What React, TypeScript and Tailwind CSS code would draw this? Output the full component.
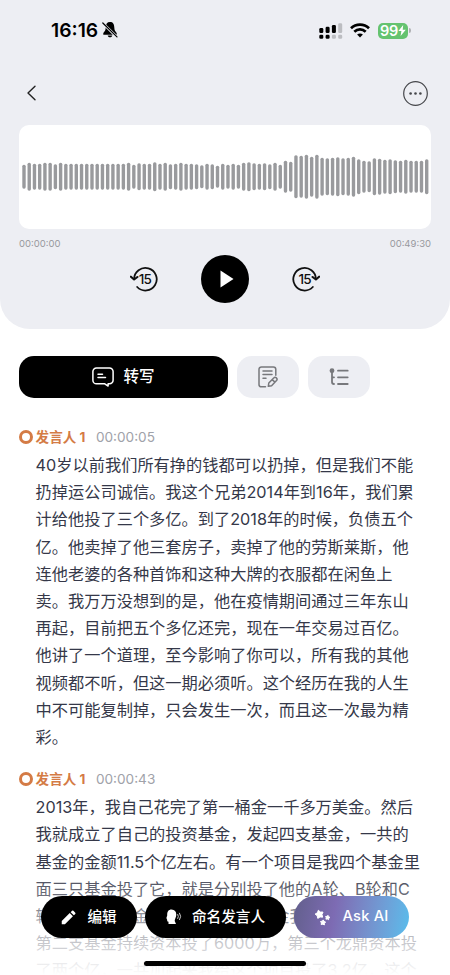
interface Segment {
  speaker: string;
  time: string;
  lines: string[];
}

const segments: Segment[] = [
  {
    speaker: '发言人 1',
    time: '00:00:05',
    lines: [
      '40岁以前我们所有挣的钱都可以扔掉，但是我们不能',
      '扔掉运公司诚信。我这个兄弟2014年到16年，我们累',
      '计给他投了三个多亿。到了2018年的时候，负债五个',
      '亿。他卖掉了他三套房子，卖掉了他的劳斯莱斯，他',
      '连他老婆的各种首饰和这种大牌的衣服都在闲鱼上',
      '卖。我万万没想到的是，他在疫情期间通过三年东山',
      '再起，目前把五个多亿还完，现在一年交易过百亿。',
      '他讲了一个道理，至今影响了你可以，所有我的其他',
      '视频都不听，但这一期必须听。这个经历在我的人生',
      '中不可能复制掉，只会发生一次，而且这一次最为精',
      '彩。',
    ],
  },
  {
    speaker: '发言人 1',
    time: '00:00:43',
    lines: [
      '2013年，我自己花完了第一桶金一千多万美金。然后',
      '我就成立了自己的投资基金，发起四支基金，一共的',
      '基金的金额11.5个亿左右。有一个项目是我四个基金里',
      '面三只基金投了它，就是分别投了他的A轮、B轮和C',
      '轮，我们的基金在B轮投了它，基金我',
      '第二支基金持续资本投了6000万，第三个龙鼎资本投',
      '了两个亿，一共加起来我给这个项目投了3.2亿，这个',
    ],
  },
];

const bars = [
  24, 28, 26, 26, 28, 28, 25, 28, 26, 26, 26, 26, 26, 26, 26, 26, 26, 26, 26, 26, 28, 24, 27, 26, 26, 29,
  26, 28, 25, 26, 28, 26, 26, 25, 23, 26, 25, 22, 26, 24, 26, 24, 28, 29, 27, 26, 27, 25, 28, 24, 32, 30,
  43, 42, 44, 40, 44, 38, 37, 38, 39, 37, 38, 40, 35, 32, 31, 37, 36, 34, 35, 33, 32, 34, 32, 32, 32, 35,
];

function starPoints(cx: number, cy: number, r: number, turn: number) {
  return Array.from({ length: 10 }, (_, i) => {
    const radius = i % 2 ? r * 0.6 : r;
    const angle = (i * Math.PI) / 5 + turn;
    return `${(cx + radius * Math.sin(angle)).toFixed(2)},${(cy - radius * Math.cos(angle)).toFixed(2)}`;
  }).join(' ');
}

function StatusBar() {
  return (
    <div className="flex h-[61px] items-center justify-between pl-[51px] pr-[39px]">
      <div className="flex items-center gap-[4px]">
        <span className="text-[19.3px] font-semibold leading-none text-black">16:16</span>
        <svg className="h-[18px] w-[16px]" viewBox="0 0 16 18">
          <path d="M8 1C5 1 3.8 3 3.7 6.5 3.6 9.5 2.8 10.3 1.3 12v1.7h13.4V12c-1.5-1.7-2.3-2.5-2.4-5.5C12.2 3 11 1 8 1ZM5.7 14.5c.2 1.2 1 1.8 2.3 1.8s2.1-.6 2.3-1.8Z" fill="#000" />
          <path d="M1.3 2.6 14.8 16" stroke="#edeef3" strokeWidth="2.6" />
          <path d="M.8 2 15 15.9" stroke="#000" strokeWidth="1.2" strokeLinecap="round" />
        </svg>
      </div>
      <div className="flex items-center">
        <svg className="h-4 w-6" viewBox="0 0 24 16">
          <g fill="#000">
            <rect x=".3" y="5" width="4" height="5" rx="1.3" />
            <rect x="6.6" y="3.8" width="4" height="6.2" rx="1.3" />
            <rect x="12.9" y="2" width="4" height="8" rx="1.3" />
            <rect x=".3" y="11.7" width="4" height="4" rx="1.3" />
            <rect x="6.6" y="11.7" width="4" height="4" rx="1.3" />
          </g>
          <g fill="#bcbdc1">
            <rect x="19.2" y=".2" width="4" height="9.8" rx="1.3" />
            <rect x="12.9" y="11.7" width="4" height="4" rx="1.3" />
            <rect x="19.2" y="11.7" width="4" height="4" rx="1.3" />
          </g>
        </svg>
        <svg className="ml-[7px] h-[15px] w-5" viewBox="0 0 20 15" fill="none" stroke="#000" strokeWidth="2.7">
          <path d="M1 5.3C6 .5 14 .5 19 5.3" />
          <path d="M4.3 8.7c3.3-3.1 8.1-3.1 11.4 0" />
          <path d="M10 14.5 7.1 11.5c1.7-1.4 4.1-1.4 5.8 0Z" fill="#000" stroke="none" />
        </svg>
        <div className="ml-[8px] flex h-[16px] w-[30px] items-center justify-center rounded-[5px] bg-[#65c36f] text-white">
          <span className="pt-px text-[14.5px] font-semibold leading-none tracking-[-0.2px]">99</span>
          <svg className="h-[11px] w-[8px]" viewBox="0 0 8 11">
            <path d="M5.2 0 .4 6h3L2.6 11 7.8 4.7H4.7Z" fill="#fff" />
          </svg>
        </div>
        <span className="ml-px h-[5px] w-[2px] rounded-r-full bg-[#b0b1b5]" />
      </div>
    </div>
  );
}

function SkipIcon({ forward = false }: { forward?: boolean }) {
  return (
    <svg className="h-7 w-7" viewBox="0 0 28 28" fill="none" stroke="#111" strokeWidth="1.8" strokeLinecap="round" strokeLinejoin="round">
      <g transform={forward ? 'translate(28 0) scale(-1 1)' : undefined}>
        <path d="M4.1 14.2A11.3 11.3 0 1 1 7.2 22" />
        <path d="M.9 11.7 4.1 14.5 7.4 12" strokeWidth="2.1" />
      </g>
      <text x={forward ? 12.6 : 15} y="19.1" textAnchor="middle" fontSize="13.5" fontWeight="500" letterSpacing="-.8" fill="#111" stroke="none">
        15
      </text>
    </svg>
  );
}

function Player() {
  return (
    <header className="h-[329px] rounded-b-[30px] bg-[#edeef3]">
      <StatusBar />
      <div className="flex h-[64px] items-center justify-between pl-[26px] pr-[22px]">
        <svg className="h-4 w-3" viewBox="0 0 12 16" fill="none" stroke="#222" strokeWidth="1.4" strokeLinecap="round" strokeLinejoin="round">
          <path d="M9 1.2 2 8l7 6.8" />
        </svg>
        <svg className="h-[25px] w-[25px]" viewBox="0 0 25 25">
          <circle cx="12.5" cy="12.5" r="11.8" fill="none" stroke="#45464a" strokeWidth="1.2" />
          <g fill="#45464a">
            <circle cx="7.6" cy="12.5" r="1.3" />
            <circle cx="12.5" cy="12.5" r="1.3" />
            <circle cx="17.4" cy="12.5" r="1.3" />
          </g>
        </svg>
      </div>
      <div className="mx-[19px] flex h-[104px] items-center rounded-[10px] bg-white">
        <svg className="h-[50px] w-[412px]" viewBox="0 0 412 50">
          {bars.map((h, i) => (
            <rect key={i} x={3.3 + i * 5.23} y={24.7 - h / 2} width="3.4" height={h} rx="1.6" fill="#999a9d" />
          ))}
        </svg>
      </div>
      <div className="mx-[19px] mt-[8px] flex justify-between text-[9.5px] leading-[14px] text-[#98999e]">
        <span>00:00:00</span>
        <span>00:49:30</span>
      </div>
      <div className="mt-[4px] flex items-center justify-center gap-[43px]">
        <SkipIcon />
        <div className="flex h-12 w-12 items-center justify-center rounded-full bg-black">
          <svg className="ml-[3px] h-[18px] w-[14px]" viewBox="0 0 14 18">
            <path d="M.5.5 13.5 9 .5 17.5Z" fill="#fff" />
          </svg>
        </div>
        <SkipIcon forward />
      </div>
    </header>
  );
}

function Tabs() {
  return (
    <div className="mt-[27px] flex h-[42px] gap-[9px] px-[19px]">
      <div className="flex w-[209px] items-center justify-center gap-[9px] rounded-[15px] bg-black text-white">
        <svg className="h-5 w-[22px]" viewBox="0 0 22 20" fill="none" stroke="#fff" strokeWidth="1.5" strokeLinecap="round" strokeLinejoin="round">
          <path d="M4.5.9h13a3.6 3.6 0 0 1 3.6 3.6v8.7a3.6 3.6 0 0 1-3.6 3.6h-1.4v2.3l-3.3-2.3H4.5a3.6 3.6 0 0 1-3.6-3.6V4.5A3.6 3.6 0 0 1 4.5.9Z" />
          <path d="M6 7.2h4.5M6 10.6h7.5" />
        </svg>
        <span className="text-[15.5px] font-medium leading-none">转写</span>
      </div>
      <div className="flex w-[62px] items-center justify-center rounded-[15px] bg-[#edeef3]">
        <svg className="h-[22px] w-[20px]" viewBox="0 0 20 22" fill="none" stroke="#77787c" strokeWidth="1.5" strokeLinecap="round" strokeLinejoin="round">
          <path d="M7.5 20.8H3.4A2.4 2.4 0 0 1 1 18.4V3.3A2.4 2.4 0 0 1 3.4.9h12A2.4 2.4 0 0 1 17.8 3.3v6" />
          <path d="M5 4.9h9M5 8.5h9M5 12.2h3" />
          <path d="m10.3 20.3.5-3.3 4.9-5a1.7 1.7 0 0 1 2.8 2.5l-4.9 5.2ZM14.2 13.6l2.7 2.5" />
        </svg>
      </div>
      <div className="flex w-[62px] items-center justify-center rounded-[15px] bg-[#edeef3]">
        <svg className="h-[18px] w-[20px]" viewBox="0 0 20 18" fill="none" stroke="#77787c" strokeWidth="1.8" strokeLinecap="round">
          <circle cx="3" cy="2.7" r="2.4" fill="#77787c" stroke="none" />
          <path d="M3 4v10q0 2 2 2M3 9.3h2M9 2.7h9.700M9 9.3h9.700M9 16h9.700" />
        </svg>
      </div>
    </div>
  );
}

function Transcript() {
  return (
    <main className="pl-[18.6px] pt-[24px]">
      {segments.map((segment) => (
        <section key={segment.time} className="mb-[13px]">
          <div className="flex h-[30px] items-center">
            <span className="h-[14px] w-[14px] rounded-full border-[3.5px] border-[#d47b45]" />
            <span className="ml-[3px] text-[13.6px] font-bold text-[#d47b45]">{segment.speaker}</span>
            <span className="ml-[10.5px] text-[13.6px] text-[#a0a2a9]">{segment.time}</span>
          </div>
          <div className="pl-[17px] text-[16.23px] leading-[27.2px] text-[#353849]">
            {segment.lines.map((line) => (
              <p key={line} className="whitespace-nowrap">{line}</p>
            ))}
          </div>
        </section>
      ))}
    </main>
  );
}

function ActionBar() {
  return (
    <div className="absolute bottom-0 left-0 h-[115px] w-full bg-linear-to-b from-white/0 from-5% via-white/65 via-65% to-white">
      <div className="mt-[36px] flex h-[42px] gap-[8px] pl-[41px] text-[14.6px] font-medium text-white">
        <div className="flex w-[96px] items-center justify-center gap-[11px] rounded-full bg-black">
          <svg className="h-[15px] w-[15px]" viewBox="0 0 16 16" fill="#fff">
            <path d="m.8 11.8 8.5-8.5 3.4 3.4-8.5 8.5H.8ZM10.3 2.3l1.5-1.5q.7-.6 1.4 0l2 2q.6.7 0 1.4l-1.5 1.5Z" />
          </svg>
          <span className="pt-px">编辑</span>
        </div>
        <div className="flex w-[141px] items-center justify-center gap-[10px] rounded-full bg-black">
          <svg className="h-4 w-4" viewBox="0 0 16 16">
            <path d="M5.5.6C8.7.6 10.3 2.7 10.3 5.8c0 2.7-1.6 4.2-1.6 6.2L10 15H2.5v-2.3C1.3 12.5 1 12 1.2 10.9L.4 9l.8-2.600C1 2.7 2.6.6 5.5.6Z" fill="#fff" />
            <path d="M11.8 5.5q1.2 2 0 4M13.6 4.2q2.3 3.2 0 6.5" fill="none" stroke="#fff" strokeWidth=".8" strokeLinecap="round" />
          </svg>
          <span className="pt-px">命名发言人</span>
        </div>
        <div className="flex w-[115px] items-center justify-center gap-[11px] rounded-full bg-linear-100 from-[#625f8c] via-[#7d6bb3] via-35% to-[#57bdec]">
          <svg className="h-[17px] w-[17px]" viewBox="0 0 17 17" fill="#fff" stroke="#fff" strokeWidth="1" strokeLinejoin="round">
            <polygon points={starPoints(5.4, 5.4, 4.3, -0.25)} />
            <polygon points={starPoints(13.6, 8.6, 2.3, 0.2)} />
            <polygon points={starPoints(9, 13.6, 2.7, 0.1)} />
          </svg>
          <span className="tracking-[.25px]">Ask AI</span>
        </div>
      </div>
      <div className="mx-auto mt-[23px] h-[5px] w-[162px] rounded-full bg-black" />
    </div>
  );
}

export default function App() {
  return (
    <div className="relative h-[975px] w-[450px] overflow-hidden bg-white font-['Inter','Noto_Sans_CJK_SC',sans-serif]">
      <Player />
      <Tabs />
      <Transcript />
      <ActionBar />
    </div>
  );
}
